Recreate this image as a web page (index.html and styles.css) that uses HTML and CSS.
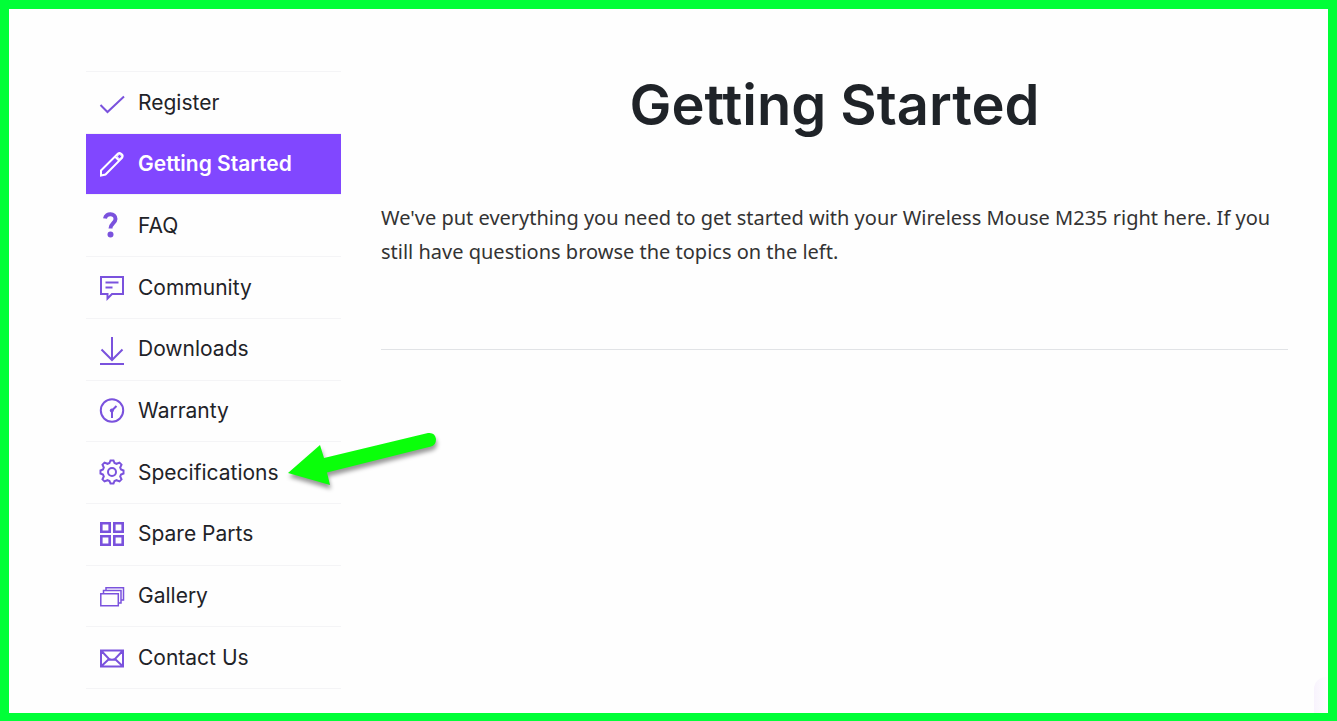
FILE: index.html
```html
<!DOCTYPE html>
<html lang="en">
<head>
    <meta charset="UTF-8">
    <meta name="viewport" content="width=device-width, initial-scale=1.0">
    <title>Wireless Mouse M235 - Getting Started</title>
    <link rel="stylesheet" href="styles.css">
</head>
<body>
    <div class="page">
        <nav class="sidebar">
            <ul class="menu">
                <li>
                    <a href="#register">
                        <svg class="icon" viewBox="0 0 26 28"><path d="M1.5 17l7 7L25 8.500"/></svg>
                        Register
                    </a>
                </li>
                <li>
                    <a href="#getting-started" class="active">
                        <svg class="icon" viewBox="0 0 26 28"><path d="M2 25.500v-5L19 3.500q1.500-1 3.500.5t.5 4L6.500 24.500l-4.500 1zM16 6.500l4.500 4.500"/><circle class="dot" cx="20.500" cy="6.500" r="2"/></svg>
                        Getting Started
                    </a>
                </li>
                <li>
                    <a href="#faq">
                        <svg class="icon" viewBox="0 0 26 28"><path class="bold" d="M6 7.500C7 1.500 16.500 2 16.500 8c0 4-5 4.500-5 9.500"/><circle class="fill" cx="11.500" cy="23.500" r="3"/></svg>
                        FAQ
                    </a>
                </li>
                <li>
                    <a href="#community">
                        <svg class="icon" viewBox="0 0 26 28"><path d="M2 4h22v17H13l-4.500 4.500V21H2zM6.500 9.500h13M6.500 14.500h7"/></svg>
                        Community
                    </a>
                </li>
                <li>
                    <a href="#downloads">
                        <svg class="icon" viewBox="0 0 26 28"><path d="M13 2v23M2.500 14.500L13 25l10.500-10.500M1 29h24"/></svg>
                        Downloads
                    </a>
                </li>
                <li>
                    <a href="#warranty">
                        <svg class="icon" viewBox="0 0 26 28"><circle cx="13" cy="13.500" r="11.200"/><path d="M13 21v-7.500l4.500-4.500"/><circle class="fill" cx="12.800" cy="13.500" r="2"/></svg>
                        Warranty
                    </a>
                </li>
                <li>
                    <a href="#specifications">
                        <svg class="icon" viewBox="0 0 26 28"><path d="M10.500 5l1-2.500h3l1 2.500 2 .8 3-1.200 2 2-1.300 2.900.8 2 2.500 1v3l-2.500 1-.8 2 1.300 2.900-2 2-3-1.200-2 .8-1 2.500h-3l-1-2.500-2-.8-3 1.200-2-2 1.300-2.900-.8-2-2.500-1v-3l2.500-1 .8-2-1.300-2.900 2-2 3 1.200z"/><circle cx="13" cy="14" r="4"/></svg>
                        Specifications
                    </a>
                </li>
                <li>
                    <a href="#spare-parts">
                        <svg class="icon" viewBox="0 0 26 28"><path class="medium" d="M2.300 3.300h8.400v8.400H2.300zM15.300 3.300h8.400v8.400h-8.400zM2.300 16.300h8.400v8.400H2.300zM15.300 16.300h8.400v8.400h-8.400z"/></svg>
                        Spare Parts
                    </a>
                </li>
                <li>
                    <a href="#gallery">
                        <svg class="icon" viewBox="0 0 26 28"><path class="thin" d="M1.800 11.800h17.500v12H1.800zM4.500 11.500v-3h17.500v12.500h-2.500M7 8.500v-2.700h17.500V18h-2.500"/></svg>
                        Gallery
                    </a>
                </li>
                <li>
                    <a href="#contact-us">
                        <svg class="icon" viewBox="0 0 26 28"><path d="M2 7.500h22v16H2zM2.500 8l7.500 8q3 1.500 6 0l7.500-8M2.500 23l7.500-7M23.500 23L16 16"/></svg>
                        Contact Us
                    </a>
                </li>
            </ul>
            <!-- pointer on top of the Specifications row -->
            <svg class="arrow" viewBox="0 0 160 64">
                <path d="M4 42L36 14l4 13L144 2q7-1 8 6 0 6-5 7.500L43 41.500 46 54z"/>
            </svg>
        </nav>

        <main class="content">
            <h1>Getting Started</h1>
            <p>We've put everything you need to get started with your Wireless Mouse M235 right here. If you still have questions browse the topics on the left.</p>
            <hr>
        </main>

        <div class="side-tab"></div>
    </div>
</body>
</html>
```
FILE: styles.css
```css
* {
    box-sizing: border-box;
}

body {
    margin: 0;
    background: #fefefe;
    color: #1f2328;
    font-family: Inter, "Liberation Sans", sans-serif;
}

.page {
    position: relative;
    display: flex;
    gap: 40px;
    min-height: 100vh;
    padding: 62px 40px 24px 77px;
    border: 9px solid #00ff37;
}

.sidebar {
    position: relative;
    flex: 0 0 255px;
}

.menu {
    display: grid;
    grid-auto-rows: 1fr;
    height: 618px;
    margin: 0;
    padding: 0;
    list-style: none;
    border-bottom: 1px solid #f4f4f6;
}

.menu li {
    border-top: 1px solid #f4f4f6;
}

.menu a {
    display: flex;
    align-items: center;
    gap: 13px;
    height: 60px;
    padding-left: 13px;
    color: #1f2328;
    font-size: 21px;
    text-decoration: none;
}

.menu a.active {
    background: #8147ff;
    color: #fff;
    font-weight: 600;
}

.icon {
    width: 26px;
    height: 28px;
    overflow: visible;
    fill: none;
    stroke: #7a52dd;
    stroke-width: 2;
}

.active .icon {
    stroke: #fff;
}

.icon .bold {
    stroke-width: 4;
}

.icon .medium {
    stroke-width: 2.6;
}

.icon .thin {
    stroke-width: 1.5;
}

.icon .dot {
    stroke-width: 1;
}

.icon .fill {
    fill: #7a52dd;
    stroke: none;
}

.arrow {
    position: absolute;
    top: 360px;
    left: 198px;
    width: 160px;
    height: 64px;
    overflow: visible;
    fill: #0aff0a;
    filter: drop-shadow(1px 4px 2px rgba(0, 0, 0, 0.4));
}

.content {
    flex: 1;
}

h1 {
    margin: 0;
    font-size: 56px;
    font-weight: 600;
    line-height: 68px;
    text-align: center;
}

p {
    margin: 62px 0 80px;
    color: #333;
    font-family: "Noto Sans", "Open Sans", sans-serif;
    font-size: 20px;
    line-height: 34px;
}

hr {
    margin: 0;
    border: 0;
    border-top: 1px solid #e1e3e6;
}

/* edge of the floating widget in the bottom corner */
.side-tab {
    position: absolute;
    right: 0;
    bottom: 0;
    width: 14px;
    height: 36px;
    border-radius: 12px 0 0 0;
    background: linear-gradient(to right, #f8f3fd, #fefefe);
}
```
